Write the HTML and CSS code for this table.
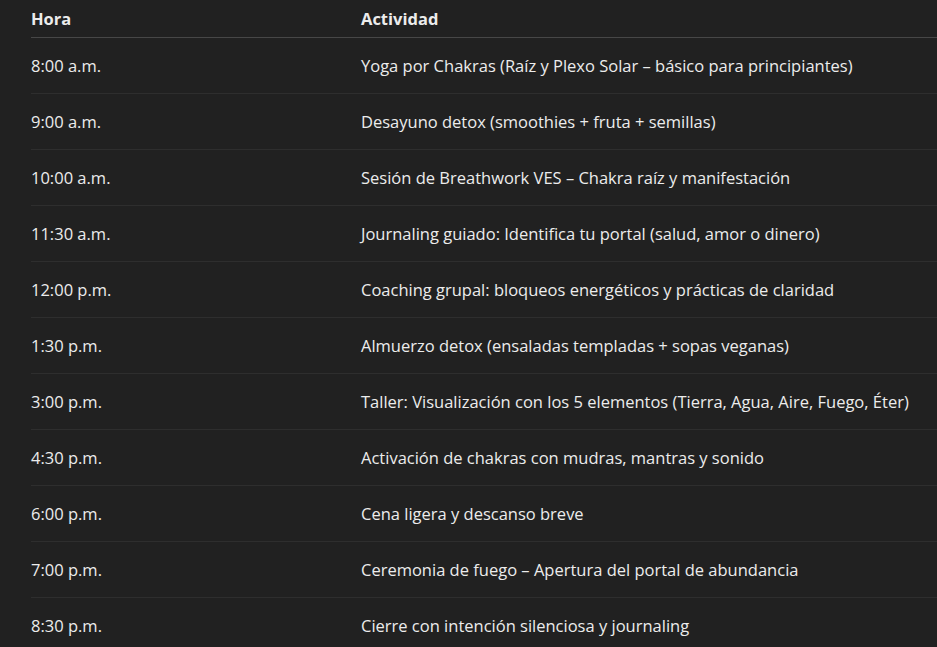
FILE: index.html
```html
<!DOCTYPE html>
<html lang="es">
<head>
    <meta charset="UTF-8">
    <title>Agenda</title>
    <link rel="stylesheet" href="styles.css">
</head>
<body>
    <table class="agenda">
        <thead>
            <tr>
                <th class="hora">Hora</th>
                <th>Actividad</th>
            </tr>
        </thead>
        <tbody>
            <tr><td class="hora">8:00 a.m.</td><td>Yoga por Chakras (Raíz y Plexo Solar – básico para principiantes)</td></tr>
            <tr><td class="hora">9:00 a.m.</td><td>Desayuno detox (smoothies + fruta + semillas)</td></tr>
            <tr><td class="hora">10:00 a.m.</td><td>Sesión de Breathwork VES – Chakra raíz y manifestación</td></tr>
            <tr><td class="hora">11:30 a.m.</td><td>Journaling guiado: Identifica tu portal (salud, amor o dinero)</td></tr>
            <tr><td class="hora">12:00 p.m.</td><td>Coaching grupal: bloqueos energéticos y prácticas de claridad</td></tr>
            <tr><td class="hora">1:30 p.m.</td><td>Almuerzo detox (ensaladas templadas + sopas veganas)</td></tr>
            <tr><td class="hora">3:00 p.m.</td><td>Taller: Visualización con los 5 elementos (Tierra, Agua, Aire, Fuego, Éter)</td></tr>
            <tr><td class="hora">4:30 p.m.</td><td>Activación de chakras con mudras, mantras y sonido</td></tr>
            <tr><td class="hora">6:00 p.m.</td><td>Cena ligera y descanso breve</td></tr>
            <tr><td class="hora">7:00 p.m.</td><td>Ceremonia de fuego – Apertura del portal de abundancia</td></tr>
            <tr><td class="hora">8:30 p.m.</td><td>Cierre con intención silenciosa y journaling</td></tr>
        </tbody>
    </table>
</body>
</html>
```

FILE: styles.css
```css
body {
    font-family: "Open Sans", "Noto Sans", sans-serif;
    background-color: #212121;
    color: #ececec;
    margin: 0;
    padding: 0 0 0 31px;
    overflow: hidden;
}

.agenda {
    width: 906px;
    border-collapse: collapse;
    font-size: 16.5px;
}

th, td {
    text-align: left;
    padding: 0;
    white-space: nowrap;
}

th {
    font-weight: 700;
    height: 37px;
    border-bottom: 1px solid #474747;
    vertical-align: middle;
}

td {
    height: 55px;
    border-bottom: 1px solid #2e2e2e;
    vertical-align: middle;
}

.hora {
    width: 330px;
}
```
